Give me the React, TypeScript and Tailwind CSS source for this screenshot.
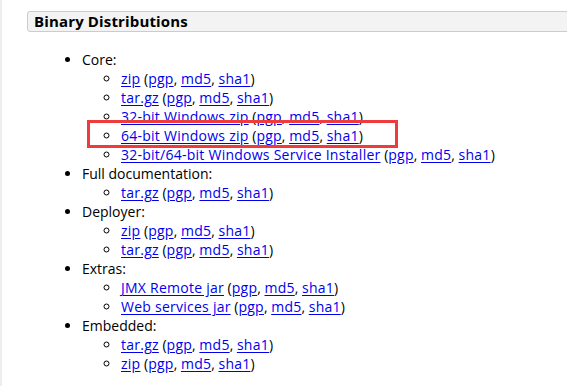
const files = [
  {
    label: 'Core:',
    items: [
      { name: 'zip' },
      { name: 'tar.gz' },
      { name: '32-bit Windows zip' },
      { name: '64-bit Windows zip', marked: true },
      { name: '32-bit/64-bit Windows Service Installer' },
    ],
  },
  { label: 'Full documentation:', items: [{ name: 'tar.gz' }] },
  { label: 'Deployer:', items: [{ name: 'zip' }, { name: 'tar.gz' }] },
  { label: 'Extras:', items: [{ name: 'JMX Remote jar' }, { name: 'Web services jar' }] },
  { label: 'Embedded:', items: [{ name: 'tar.gz' }, { name: 'zip' }] },
];

const Link = ({ children }: { children: string }) => (
  <a href="#" className="tracking-[0.25px] text-[#0000ee] underline underline-offset-[2px]">
    {children}
  </a>
);

const App = () => {
  return (
    <div
      className="h-[386px] w-full overflow-hidden border-l-2 border-[#eeeeee] bg-white text-[14px] leading-[19px] text-black"
      style={{ fontFamily: '"Open Sans", "Liberation Sans", sans-serif' }}
    >
      <div className="ml-[25px] mr-[-10px] mt-[11px] flex h-[21px] items-center rounded-[3px] border border-[#cccccc] bg-[#f3f3f3] px-[6px]">
        <h2 className="text-[15px] font-bold leading-[19px] tracking-[0.15px]">Binary Distributions</h2>
      </div>

      <ul className="mt-[18px] list-disc pl-[80px]">
        {files.map((group) => (
          <li key={group.label}>
            {group.label}
            <ul className="list-[circle] pl-[39px]">
              {group.items.map((item, i) => (
                <li key={i} className="relative">
                  {item.marked && (
                    <span className="pointer-events-none absolute left-[-34px] top-[-6px] h-[28px] w-[311px] border-[3px] border-[#ee3b3b]" />
                  )}
                  <Link>{item.name}</Link> (<Link>pgp</Link>, <Link>md5</Link>,{' '}
                  <Link>sha1</Link>)
                </li>
              ))}
            </ul>
          </li>
        ))}
      </ul>
    </div>
  );
};

export default App;
